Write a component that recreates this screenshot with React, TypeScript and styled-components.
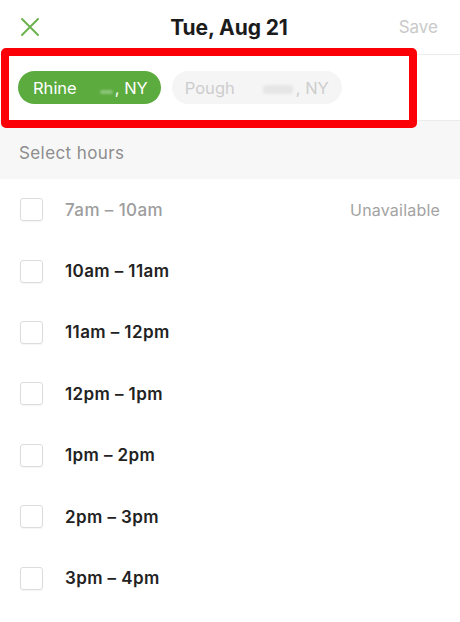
import React from 'react'
import styled, { createGlobalStyle } from 'styled-components'

const GlobalStyle = createGlobalStyle`
  html, body {
    margin: 0;
    padding: 0;
    background: #ffffff;
  }
  body {
    font-family: Inter, "Noto Sans", "Liberation Sans", sans-serif;
    -webkit-font-smoothing: antialiased;
  }
`

const Screen = styled.div`
  position: relative;
  width: 460px;
  height: 622px;
  overflow: hidden;
  background: #fff;
`

const Header = styled.header`
  height: 54px;
  display: grid;
  grid-template-columns: 1fr auto 1fr;
  align-items: center;
  padding: 0 22px 0 20px;
  border-bottom: 1px solid #ececec;
`

const CloseButton = styled.button`
  justify-self: start;
  width: 20px;
  height: 20px;
  padding: 0;
  border: none;
  background: none;
  display: flex;
  align-items: center;
  justify-content: center;
`

const Title = styled.h1`
  margin: 0;
  font-size: 21px;
  font-weight: 700;
  color: #1b1b1b;
  letter-spacing: -0.1px;
`

const SaveButton = styled.span`
  justify-self: end;
  font-size: 17px;
  color: #c9c9c9;
`

const ChipRow = styled.div`
  height: 65px;
  display: flex;
  align-items: center;
  gap: 11px;
  padding-left: 18px;
  border-bottom: 1px solid #ececec;
`

const Chip = styled.div<{ $active?: boolean }>`
  height: 33px;
  display: flex;
  align-items: center;
  padding: 0 ${p => (p.$active ? 13 : 13)}px 0 ${p => (p.$active ? 15 : 13)}px;
  border-radius: 17px;
  font-size: 16.5px;
  background: ${p => (p.$active ? '#5cab3f' : '#f5f5f5')};
  color: ${p => (p.$active ? '#ffffff' : '#cdcdcd')};
`

const Redacted = styled.span<{ $w: number; $active?: boolean }>`
  display: inline-block;
  width: ${p => p.$w}px;
  height: ${p => (p.$active ? 4 : 9)}px;
  margin: ${p => (p.$active ? '9px 2px 0 auto' : '4px 3px 0 28px')};
  border-radius: 3px;
  background: ${p => (p.$active ? '#8cc679' : '#e6e6e6')};
  filter: blur(1px);
`

const ChipGap = styled.span<{ $w: number }>`
  display: inline-flex;
  width: ${p => p.$w}px;
`

const SectionHeader = styled.div`
  height: 58px;
  display: flex;
  align-items: center;
  padding: 6px 0 0 19px;
  box-sizing: border-box;
  background: #f7f7f7;
  font-size: 17px;
  letter-spacing: 0.4px;
  color: #8d8d8d;
`

const List = styled.div`
  display: flex;
  flex-direction: column;
`

const Row = styled.div`
  height: 61.4px;
  display: flex;
  align-items: center;
  padding: 0 20px;
`

const Box = styled.span`
  width: 23px;
  height: 23px;
  box-sizing: border-box;
  border: 1px solid #dcdcdc;
  border-radius: 3px;
  box-shadow: 0 1px 1px rgba(0, 0, 0, 0.04);
  flex-shrink: 0;
`

const Slot = styled.span<{ $disabled?: boolean }>`
  margin-left: 22px;
  font-size: 17px;
  letter-spacing: 0.4px;
  font-weight: ${p => (p.$disabled ? 500 : 600)};
  color: ${p => (p.$disabled ? '#9d9d9d' : '#222222')};
`

const Note = styled.span`
  margin-left: auto;
  font-size: 16px;
  letter-spacing: 0.2px;
  color: #a3a3a3;
`

const Highlight = styled.div`
  position: absolute;
  left: 1px;
  top: 48px;
  width: 416px;
  height: 80px;
  box-sizing: border-box;
  border: 8px solid #fb0007;
  border-radius: 5px;
  pointer-events: none;
`

const slots = [
  { label: '7am – 10am', unavailable: true },
  { label: '10am – 11am' },
  { label: '11am – 12pm' },
  { label: '12pm – 1pm' },
  { label: '1pm – 2pm' },
  { label: '2pm – 3pm' },
  { label: '3pm – 4pm' },
]

export default function App() {
  return (
    <Screen>
      <GlobalStyle />
      <Header>
        <CloseButton aria-label="Close">
          <svg width="20" height="20" viewBox="0 0 20 20">
            <path d="M2 2 L18 18 M18 2 L2 18" stroke="#6cb24f" strokeWidth="2" strokeLinecap="round" />
          </svg>
        </CloseButton>
        <Title>Tue, Aug 21</Title>
        <SaveButton>Save</SaveButton>
      </Header>

      <ChipRow>
        <Chip $active>
          Rhine
          <ChipGap $w={38}>
            <Redacted $w={13} $active />
          </ChipGap>
          , NY
        </Chip>
        <Chip>
          Pough
          <Redacted $w={30} />
          , NY
        </Chip>
      </ChipRow>

      <SectionHeader>Select hours</SectionHeader>

      <List>
        {slots.map(s => (
          <Row key={s.label}>
            <Box />
            <Slot $disabled={s.unavailable}>{s.label}</Slot>
            {s.unavailable && <Note>Unavailable</Note>}
          </Row>
        ))}
      </List>

      <Highlight />
    </Screen>
  )
}
